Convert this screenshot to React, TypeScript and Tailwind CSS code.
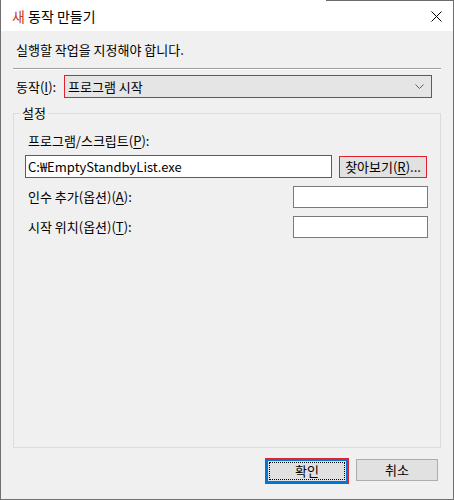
import React from "react";

function Key({ k }: { k: string }) {
  return <span className="underline underline-offset-2">{k}</span>;
}

export default function App() {
  return (
    <div className="relative w-[454px] h-[500px] bg-[#f0f0f0] border-x border-b border-[#707070] flex flex-col text-[13px] text-black font-['Noto_Sans_CJK_KR','Noto_Sans',sans-serif] leading-[16px] overflow-hidden">
      {/* strip of the window behind */}
      <div className="absolute top-0 left-[325px] right-0 h-px bg-[#6b6b6b]"></div>

      {/* Title bar */}
      <div className="h-[31px] bg-white flex items-center justify-between pl-[11px] pr-[10px] shrink-0">
        <span className="text-[14px]">
          <span className="text-[#c4391d]">새</span> 동작 만들기
        </span>
        <svg width="11" height="11" viewBox="0 0 11 11" className="mt-[1px] mr-[1px]">
          <path d="M0.5 0.5 L10.5 10.5 M10.5 0.5 L0.5 10.5" stroke="#000" strokeWidth="1" />
        </svg>
      </div>

      {/* Instruction */}
      <div className="mt-[11px] ml-[15px]">실행할 작업을 지정해야 합니다.</div>
      <div className="mt-[10px] mx-[12px] border-t border-[#a0a0a0] border-b border-b-white"></div>

      {/* Action row */}
      <div className="mt-[5px] ml-[15px] flex items-center h-[23px]">
        <span className="w-[48px]">
          동작(<Key k="I" />):
        </span>
        <div className="w-[368px] h-[23px] border border-[#e2212f] bg-[#e5e5e5] flex items-center justify-between pl-[3px] pr-[7px]">
          <span>프로그램 시작</span>
          <svg width="9" height="5" viewBox="0 0 9 5">
            <path d="M0.5 0.5 L4.5 4.5 L8.5 0.5" stroke="#5f5f5f" strokeWidth="1" fill="none" />
          </svg>
        </div>
      </div>

      {/* Group box */}
      <div className="relative mt-[15px] ml-[12px] w-[428px] h-[335px] border border-[#dcdcdc] shrink-0">
        <span className="absolute -top-[9px] left-[6px] px-[2px] bg-[#f0f0f0]">설정</span>

        <div className="pt-[19px] pl-[14px]">
          프로그램/스크립트(<Key k="P" />):
        </div>

        <div className="mt-[6px] pl-[11px] flex items-start gap-[7px]">
          <div className="w-[307px] h-[23px] border border-[#e2212f] bg-white flex items-center pl-[2px]">
            C:₩EmptyStandbyList.exe
          </div>
          <div className="mt-[1px] w-[88px] h-[22px] border border-[#e2212f] bg-[#e1e1e1] flex items-center justify-center">
            찾아보기(<Key k="R" />)...
          </div>
        </div>

        <div className="mt-[8px] pl-[14px] pr-[12px] flex items-center justify-between">
          <span>
            인수 추가(옵션)(<Key k="A" />):
          </span>
          <div className="w-[135px] h-[22px] border border-[#7a7a7a] bg-white"></div>
        </div>

        <div className="mt-[8px] pl-[14px] pr-[12px] flex items-center justify-between">
          <span>
            시작 위치(옵션)(<Key k="T" />):
          </span>
          <div className="w-[135px] h-[22px] border border-[#7a7a7a] bg-white"></div>
        </div>
      </div>

      {/* Buttons */}
      <div className="mt-[10px] pr-[15px] flex justify-end items-start gap-[7px]">
        <div className="w-[84px] h-[26px] border border-[#e2212f]">
          <div className="w-full h-full border-2 border-[#0078d7] bg-[#e1e1e1] p-px">
            <div className="w-full h-full border border-dotted border-black flex items-center justify-center">
              확인
            </div>
          </div>
        </div>
        <div className="mt-px w-[82px] h-[22px] border border-[#adadad] bg-[#e1e1e1] flex items-center justify-center">
          취소
        </div>
      </div>
    </div>
  );
}
